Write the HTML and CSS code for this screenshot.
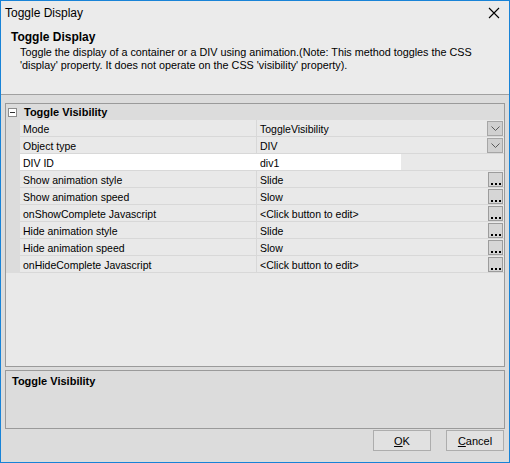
FILE: index.html
```html
<!DOCTYPE html>
<html>
<head>
<meta charset="utf-8">
<link rel="stylesheet" href="styles.css">
</head>
<body>
<div class="window">
  <div class="titlebar">
    <span class="title">Toggle Display</span>
    <svg class="close" width="12" height="12" viewBox="0 0 12 12"><path d="M1 1 L11 11 M11 1 L1 11" stroke="#000" stroke-width="1.1" fill="none"/></svg>
  </div>
  <div class="header">
    <div class="h-title">Toggle Display</div>
    <div class="h-desc">Toggle the display of a container or a DIV using animation.(Note: This method toggles the CSS<br>'display' property. It does not operate on the CSS 'visibility' property).</div>
  </div>
  <div class="body">
    <div class="grid">
      <div class="cat"><span class="minus"></span><span class="cat-name">Toggle Visibility</span></div>
      <div class="row"><div class="m"></div><div class="cells"><div class="label">Mode</div><div class="value"><span class="v">ToggleVisibility</span><span class="dd"><svg width="9" height="5" viewBox="0 0 9 5"><path d="M0.5 0.5 L4.5 4.5 L8.5 0.5" stroke="#5a5a5a" fill="none"/></svg></span></div></div></div>
      <div class="row"><div class="m"></div><div class="cells"><div class="label">Object type</div><div class="value"><span class="v">DIV</span><span class="dd"><svg width="9" height="5" viewBox="0 0 9 5"><path d="M0.5 0.5 L4.5 4.5 L8.5 0.5" stroke="#5a5a5a" fill="none"/></svg></span></div></div></div>
      <div class="row edit"><div class="m"></div><div class="cells"><div class="label">DIV ID</div><div class="value"><span class="v editbox">div1</span></div></div></div>
      <div class="row"><div class="m"></div><div class="cells"><div class="label">Show animation style</div><div class="value"><span class="v">Slide</span><span class="el"><i></i><i></i><i></i></span></div></div></div>
      <div class="row"><div class="m"></div><div class="cells"><div class="label">Show animation speed</div><div class="value"><span class="v">Slow</span><span class="el"><i></i><i></i><i></i></span></div></div></div>
      <div class="row"><div class="m"></div><div class="cells"><div class="label">onShowComplete Javascript</div><div class="value"><span class="v">&lt;Click button to edit&gt;</span><span class="el"><i></i><i></i><i></i></span></div></div></div>
      <div class="row"><div class="m"></div><div class="cells"><div class="label">Hide animation style</div><div class="value"><span class="v">Slide</span><span class="el"><i></i><i></i><i></i></span></div></div></div>
      <div class="row"><div class="m"></div><div class="cells"><div class="label">Hide animation speed</div><div class="value"><span class="v">Slow</span><span class="el"><i></i><i></i><i></i></span></div></div></div>
      <div class="row"><div class="m"></div><div class="cells"><div class="label">onHideComplete Javascript</div><div class="value"><span class="v">&lt;Click button to edit&gt;</span><span class="el"><i></i><i></i><i></i></span></div></div></div>
    </div>
    <div class="desc">Toggle Visibility</div>
    <div class="buttons">
      <button class="btn"><u>O</u>K</button>
      <button class="btn"><u>C</u>ancel</button>
    </div>
  </div>
</div>
</body>
</html>
```

FILE: styles.css
```css
* { box-sizing: border-box; }
html, body { margin: 0; padding: 0; }
body {
  width: 510px;
  height: 463px;
  font-family: "Liberation Sans", Arial, sans-serif;
  color: #000;
  background: #fff;
}
.window {
  width: 510px;
  height: 463px;
  border: 1px solid #1883d7;
  display: flex;
  flex-direction: column;
  background: #dcdcdc;
}
.titlebar {
  height: 24px;
  flex: none;
  background: #ebebeb;
  display: flex;
  align-items: center;
  justify-content: space-between;
  padding: 0 9px 0 4px;
}
.title { font-size: 12px; }
.close { display: block; }
.header {
  height: 70px;
  flex: none;
  background: #ebebeb;
  border-bottom: 1px solid #a0a0a0;
  padding: 4px 0 0 10px;
}
.h-title {
  font-weight: bold;
  font-size: 12px;
  line-height: 16px;
}
.h-desc {
  font-size: 10.8px;
  line-height: 13px;
  padding-left: 9px;
  margin-top: 1px;
}
.body {
  flex: 1;
  display: flex;
  flex-direction: column;
  padding: 8px 4px 0 4px;
}
.grid {
  height: 264px;
  flex: none;
  border: 1px solid #9a9a9a;
  background: #e9e9e9;
  font-size: 10.5px;
}
.cat {
  height: 16px;
  background: #dcdcdc;
  display: flex;
  align-items: center;
}
.minus {
  width: 9px;
  height: 9px;
  border: 1px solid #8c8c8c;
  background: #fff;
  margin-left: 2px;
  position: relative;
  flex: none;
}
.minus::after {
  content: "";
  position: absolute;
  left: 1px;
  right: 1px;
  top: 3px;
  height: 1px;
  background: #333;
}
.cat-name {
  font-weight: bold;
  font-size: 11px;
  margin-left: 7px;
}
.row {
  display: flex;
  height: 17px;
}
.m {
  width: 14px;
  flex: none;
  background: #dcdcdc;
}
.cells {
  flex: 1;
  display: flex;
  border-bottom: 1px solid #d8d8d8;
}
.label {
  width: 237px;
  flex: none;
  border-right: 1px solid #d8d8d8;
  padding-left: 3px;
  line-height: 16px;
  padding-top: 1px;
  white-space: nowrap;
}
.value {
  flex: 1;
  display: flex;
  align-items: center;
  justify-content: space-between;
  line-height: 16px;
}
.v { padding-left: 3px; padding-top: 1px; white-space: nowrap; }
.row.edit .label { background: #fff; border-right-color: #fff; }
.editbox {
  background: #fff;
  width: 144px;
  align-self: stretch;
}
.dd {
  width: 16px;
  height: 15px;
  margin-right: 1px;
  background: #d0d0d0;
  border: 1px solid #a6a6a6;
  display: flex;
  align-items: center;
  justify-content: center;
}
.dd svg { display: block; margin-top: 1px; }
.el {
  width: 15px;
  height: 15px;
  margin-right: 1px;
  background: #d6d6d6;
  border: 1px solid #9c9c9c;
  display: flex;
  align-items: flex-end;
  justify-content: center;
  gap: 2px;
  padding-bottom: 1px;
}
.el i {
  display: block;
  width: 2px;
  height: 2px;
  background: #000;
}
.desc {
  margin-top: 3px;
  height: 59px;
  flex: none;
  border: 1px solid #9a9a9a;
  background: #dcdcdc;
  font-weight: bold;
  font-size: 11px;
  padding: 4px 0 0 6px;
}
.buttons {
  margin-top: 1px;
  margin-right: 1px;
  display: flex;
  justify-content: flex-end;
  gap: 15px;
}
.btn {
  width: 58px;
  height: 21px;
  border: 1px solid #adadad;
  background: #e1e1e1;
  font-family: "Liberation Sans", Arial, sans-serif;
  font-size: 11px;
  color: #000;
  padding: 0;
}
```
